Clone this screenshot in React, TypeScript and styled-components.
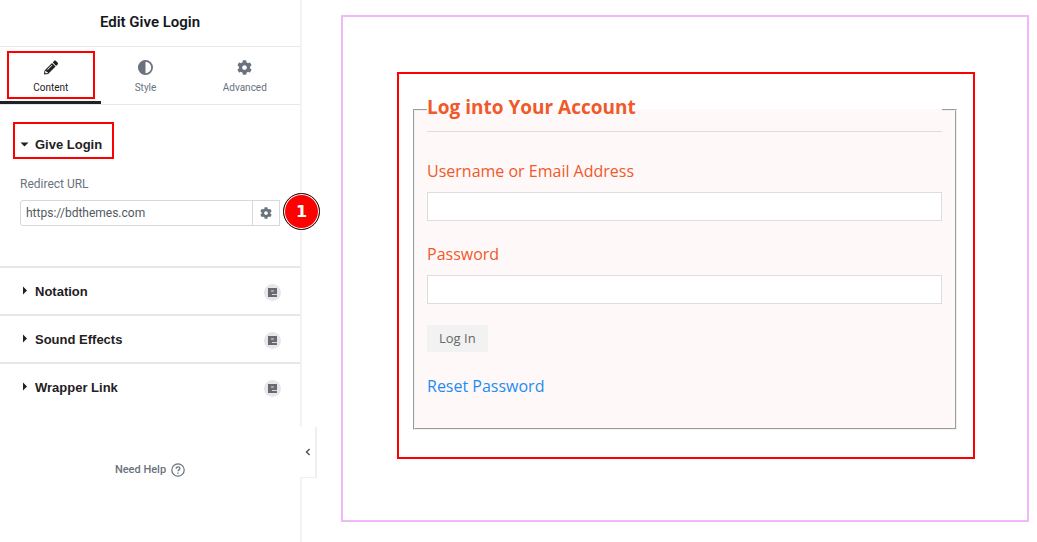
import React from "react";
import styled, { createGlobalStyle, css } from "styled-components";
import { FaPencilAlt, FaCog } from "react-icons/fa";

const GlobalStyle = createGlobalStyle`
  *, *::before, *::after { box-sizing: border-box; }
  body { margin: 0; background: #fff; }
  button, input { font: inherit; margin: 0; }
`;

const Page = styled.div`
  display: flex;
  min-height: 100vh;
`;

const Sidebar = styled.aside`
  position: relative;
  flex: 0 0 302px;
  border-right: 2px solid #f3f3f4;
  font-family: Roboto, "Liberation Sans", sans-serif;
  font-size: 12px;
  line-height: 16px;
  color: #69727d;
`;

const PanelHeader = styled.header`
  padding: 11px 0 13px;
  border-bottom: 1px solid #e6e8ea;
  text-align: center;
`;

const PanelTitle = styled.h1`
  margin: 0;
  font-size: 15px;
  line-height: 22px;
  font-weight: 600;
  color: #15171c;
`;

const Tabs = styled.div`
  display: flex;
  border-bottom: 1px solid #e6e8ea;
`;

const Highlight = css`
  &::after {
    content: "";
    position: absolute;
    border: 2px solid #f00;
    pointer-events: none;
  }
`;

const Tab = styled.button<{ $active?: boolean }>`
  position: relative;
  flex: 1 1 auto;
  display: flex;
  flex-direction: column;
  align-items: center;
  gap: 5px;
  padding: 13px 0 5px;
  border: 0;
  border-bottom: 3px solid ${(p) => (p.$active ? "#1f2124" : "transparent")};
  background: none;
  font-size: 10px;
  line-height: 16px;
  color: ${(p) => (p.$active ? "#1f2124" : "#69727d")};
  svg { display: block; height: 15px; }
  ${(p) => p.$active && Highlight}
  &::after { inset: 4px 6px 2px 7px; }
`;

const Section = styled.section<{ $open?: boolean }>`
  ${(p) => (p.$open ? "padding: 15px 0 40px;" : "border-top: 2px solid #e6e7ec;")}
`;

const SectionHead = styled.button<{ $marked?: boolean }>`
  position: relative;
  display: flex;
  align-items: center;
  width: 100%;
  height: ${(p) => (p.$marked ? 48 : 46)}px;
  padding: 2px 19px 0 20px;
  border: 0;
  background: none;
  font-family: "Liberation Sans", Arial, sans-serif;
  font-size: 13px;
  font-weight: 700;
  color: #1f2124;
  text-align: left;
  ${(p) => p.$marked && Highlight}
  &::after { inset: 2px 186px 9px 13px; }
`;

const Caret = styled.span`
  display: flex;
  width: 15px;
`;

const SectionName = styled.span`
  flex: 1;
`;

const ProBadge = styled.span`
  display: grid;
  place-items: center;
  width: 17px;
  height: 17px;
  border-radius: 50%;
  background: #e6e7ec;
`;

const Control = styled.div`
  display: flex;
  flex-direction: column;
  gap: 8px;
  padding: 8px 20px 0;
`;

const InputRow = styled.div`
  position: relative;
  display: flex;
`;

const UrlInput = styled.input`
  flex: 1;
  min-width: 0;
  height: 26px;
  padding: 0 5px;
  border: 1px solid #d5d8dc;
  border-radius: 3px 0 0 3px;
  background: #fff;
  color: #515962;
`;

const OptionsButton = styled.button`
  display: grid;
  place-items: center;
  width: 28px;
  padding: 0;
  margin-left: -1px;
  border: 1px solid #d5d8dc;
  background: #fff;
  color: #69727d;
`;

const StepBadge = styled.span`
  position: absolute;
  z-index: 1;
  top: -7px;
  right: -40px;
  display: grid;
  place-items: center;
  width: 37px;
  height: 37px;
  border: 1px solid #111;
  border-radius: 50%;
  background: #f00;
  box-shadow: inset 0 0 0 1px #fff;
  font-family: "DejaVu Sans", sans-serif;
  font-size: 16px;
  font-weight: 700;
  color: #fff;
`;

const HelpLink = styled.a`
  display: flex;
  align-items: center;
  justify-content: center;
  gap: 5px;
  margin-top: 52px;
  font-size: 11px;
  font-weight: 500;
  color: #69727d;
  text-decoration: none;
`;

const Collapse = styled.button`
  position: absolute;
  z-index: 1;
  left: 300px;
  bottom: 64px;
  display: grid;
  place-items: center;
  width: 17px;
  height: 51px;
  padding: 0;
  border: 0;
  border-right: 2px solid #f0f0f1;
  border-bottom: 1px solid #f0f0f1;
  background: #fff;
  color: #515962;
`;

const Canvas = styled.main`
  flex: 1;
  display: flex;
  min-width: 0;
  padding: 15px 8px 20px 39px;
`;

const Container = styled.div`
  flex: 1;
  min-width: 0;
  padding: 55px 52px 61px 54px;
  border: 2px solid #f0b8f8;
`;

const Widget = styled.div`
  padding: 14px 16px 27px 14px;
  border: 2px solid #f00;
  font-family: "Open Sans", "Noto Sans", sans-serif;
  font-size: 16px;
  line-height: 24px;
  color: #f0592a;
`;

const Fieldset = styled.fieldset`
  min-width: 0;
  margin: 0;
  padding: 27px 13px 29px 12px;
  border: 2px groove #f0f0f0;
  background: #fff8f8;
`;

const Legend = styled.legend`
  width: 100%;
  height: 44px;
  padding: 7px 0 0;
  border-bottom: 1px solid #ddd;
  font-size: 19px;
  font-weight: 700;
`;

const Form = styled.form`
  display: flex;
  flex-direction: column;
  align-items: flex-start;
  gap: 21px;
`;

const Field = styled.label`
  display: flex;
  flex-direction: column;
  gap: 9px;
  width: 100%;
`;

const TextInput = styled.input`
  height: 29px;
  padding: 0 8px;
  border: 1px solid #ddd;
  background: #fff;
`;

const Submit = styled.button`
  height: 27px;
  padding: 0 12px 2px;
  border: 0;
  background: #f2f2f2;
  font-size: 13px;
  line-height: 24px;
  color: #666;
`;

const ResetLink = styled.a`
  line-height: 26px;
  color: #1e8cf0;
  text-decoration: none;
`;

const ContrastIcon = () => (
  <svg width="15" height="15" viewBox="0 0 15 15" aria-hidden="true">
    <circle cx="7.5" cy="7.5" r="6.6" fill="none" stroke="currentColor" strokeWidth="1.8" />
    <path d="M7.5 0.5a7 7 0 0 0 0 14z" fill="currentColor" />
  </svg>
);

const CaretDown = () => (
  <svg width="9" height="12" viewBox="0 0 9 12" fill="currentColor" aria-hidden="true">
    <path d="M0.5 3.5h8l-4 4z" />
  </svg>
);

const CaretRight = () => (
  <svg width="9" height="12" viewBox="0 0 9 12" fill="currentColor" aria-hidden="true">
    <path d="M3 0.5v8l4-4z" />
  </svg>
);

const PackIcon = () => (
  <svg width="9" height="9" viewBox="0 0 9 9" aria-hidden="true">
    <path d="M0 0h9v9H0z" fill="#696970" />
    <path d="M3 2h3v2H3z" fill="#a3a3a8" />
    <path d="M4 6h5v1H4z" fill="#d4d5d8" />
  </svg>
);

const HelpIcon = () => (
  <svg width="14" height="14" viewBox="0 0 14 14" fill="none" stroke="currentColor" aria-hidden="true">
    <circle cx="7" cy="7" r="6.2" strokeWidth="1.2" />
    <path d="M5.2 5.7c0-2.5 3.7-2.3 3.7-.1 0 1.3-1.9 1.3-1.9 2.7" strokeWidth="1.3" />
    <path d="M7 9.4v1.4" strokeWidth="1.4" />
  </svg>
);

const closedSections = ["Notation", "Sound Effects", "Wrapper Link"];

export default function App() {
  return (
    <>
      <GlobalStyle />
      <Page>
        <Sidebar>
          <PanelHeader>
            <PanelTitle>Edit Give Login</PanelTitle>
          </PanelHeader>
          <Tabs>
            <Tab type="button" $active>
              <FaPencilAlt size={14} />
              Content
            </Tab>
            <Tab type="button">
              <ContrastIcon />
              Style
            </Tab>
            <Tab type="button">
              <FaCog size={15} />
              Advanced
            </Tab>
          </Tabs>
          <Section $open>
            <SectionHead type="button" aria-expanded="true" $marked>
              <Caret><CaretDown /></Caret>
              <SectionName>Give Login</SectionName>
            </SectionHead>
            <Control>
              <label htmlFor="redirect">Redirect URL</label>
              <InputRow>
                <UrlInput id="redirect" type="text" defaultValue="https://bdthemes.com" />
                <OptionsButton type="button" aria-label="Link options">
                  <FaCog size={12} />
                </OptionsButton>
                <StepBadge>1</StepBadge>
              </InputRow>
            </Control>
          </Section>
          {closedSections.map((name) => (
            <Section key={name}>
              <SectionHead type="button" aria-expanded="false">
                <Caret><CaretRight /></Caret>
                <SectionName>{name}</SectionName>
                <ProBadge><PackIcon /></ProBadge>
              </SectionHead>
            </Section>
          ))}
          <HelpLink href="#help">
            Need Help
            <HelpIcon />
          </HelpLink>
          <Collapse type="button" aria-label="Collapse panel">
            <svg width="6" height="8" viewBox="0 0 6 8" fill="none" aria-hidden="true">
              <path d="M4.6 1L1.5 4l3.1 3" stroke="currentColor" strokeWidth="1.5" />
            </svg>
          </Collapse>
        </Sidebar>
        <Canvas>
          <Container>
            <Widget>
              <Fieldset>
                <Legend>Log into Your Account</Legend>
                <Form>
                  <Field>
                    Username or Email Address
                    <TextInput type="text" name="username" />
                  </Field>
                  <Field>
                    Password
                    <TextInput type="password" name="password" />
                  </Field>
                  <Submit type="button">Log In</Submit>
                  <ResetLink href="#reset">Reset Password</ResetLink>
                </Form>
              </Fieldset>
            </Widget>
          </Container>
        </Canvas>
      </Page>
    </>
  );
}
